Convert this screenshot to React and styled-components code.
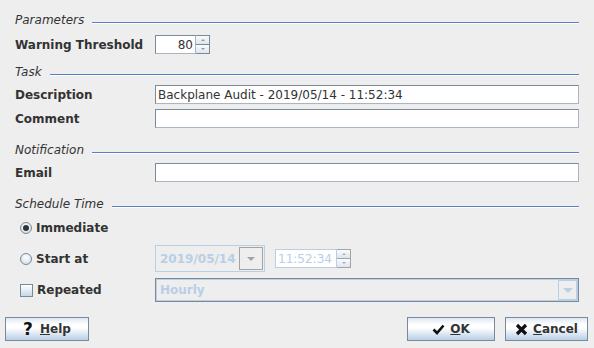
import React from "react";
import styled, { createGlobalStyle } from "styled-components";

const Global = createGlobalStyle`
  html, body {
    margin: 0;
    padding: 0;
    background: #eeeeee;
  }
  body {
    font-family: "DejaVu Sans", "Liberation Sans", sans-serif;
    font-size: 12px;
    color: #333333;
  }
`;

const Dialog = styled.div`
  width: 594px;
  height: 348px;
  display: flex;
  flex-direction: column;
  box-sizing: border-box;
  padding-top: 12px;
`;

const Form = styled.div`
  padding: 0 15px;
  display: flex;
  flex-direction: column;
`;

// section title with the etched rule after it
const Section = styled.div`
  display: flex;
  align-items: flex-start;
  height: 16px;
  margin-top: ${(p) => p.$top || 0}px;
  margin-bottom: ${(p) => p.$bottom || 0}px;
`;

const SectionTitle = styled.span`
  font-style: italic;
  font-size: 12px;
  line-height: 16px;
  color: #333;
  white-space: nowrap;
`;

const Rule = styled.div`
  flex: 1;
  margin-left: 8px;
  margin-top: 10px;
  height: 1px;
  background: #5b7fc4;
  box-shadow: 0 1px 0 #ffffff;
`;

const Row = styled.div`
  display: grid;
  grid-template-columns: 140px 1fr;
  align-items: center;
  height: ${(p) => p.$h || 19}px;
  margin-top: ${(p) => p.$top || 0}px;
`;

const Label = styled.label`
  font-weight: bold;
  font-size: 12px;
  color: #333;
  display: flex;
  align-items: center;
  gap: 4px;
`;

const TextField = styled.div`
  box-sizing: border-box;
  height: 19px;
  width: ${(p) => (p.$w ? `${p.$w}px` : "100%")};
  background: #fff;
  border: 1px solid #7a8a99;
  border-right-color: #a9b6c2;
  border-bottom-color: #a9b6c2;
  padding: 0 2px;
  display: flex;
  align-items: center;
  justify-content: ${(p) => (p.$right ? "flex-end" : "flex-start")};
  color: ${(p) => (p.$disabled ? "#b8cfe5" : "#333")};
  ${(p) => p.$disabled && "border-color: #b8cfe5;"}
  font-size: 12px;
  white-space: nowrap;
`;

const Spinner = styled.div`
  display: flex;
  align-items: stretch;
  height: 19px;
`;

const SpinButtons = styled.div`
  display: flex;
  flex-direction: column;
  width: 14px;
`;

const SpinButton = styled.div`
  flex: 1;
  box-sizing: border-box;
  border: 1px solid ${(p) => (p.$disabled ? "#a3a3a3" : "#7a8a99")};
  border-left: none;
  ${(p) => p.$down && "border-top: none;"}
  background: linear-gradient(#fafbfc, #dde5ee);
  display: flex;
  align-items: center;
  justify-content: center;
`;

const Arrow = styled.span`
  width: 0;
  height: 0;
  border-left: ${(p) => p.$size || 2}px solid transparent;
  border-right: ${(p) => p.$size || 2}px solid transparent;
  ${(p) =>
    p.$up
      ? `border-bottom: ${p.$size || 2}px solid ${p.$color || "#8d9aa8"};`
      : `border-top: ${p.$size || 2}px solid ${p.$color || "#8d9aa8"};`}
`;

const Radio = styled.span`
  box-sizing: border-box;
  width: 12px;
  height: 12px;
  border-radius: 50%;
  border: 1px solid #7a8a99;
  background: radial-gradient(circle at 50% 35%, #ffffff, #c8d8e8);
  margin-left: 5px;
  display: flex;
  align-items: center;
  justify-content: center;
  &::after {
    content: "";
    width: 6px;
    height: 6px;
    border-radius: 50%;
    background: #333;
    display: ${(p) => (p.$checked ? "block" : "none")};
  }
`;

const Check = styled.span`
  box-sizing: border-box;
  width: 13px;
  height: 13px;
  border: 1px solid #7a8a99;
  background: linear-gradient(#ffffff, #c8d8e8);
  margin-left: 5px;
`;

const Combo = styled.div`
  box-sizing: border-box;
  width: ${(p) => (p.$w ? `${p.$w}px` : "100%")};
  height: ${(p) => p.$h}px;
  border: 1px solid ${(p) => (p.$dark ? "#7a8a99" : "#b8cfe5")};
  ${(p) => p.$dark && "box-shadow: inset 0 0 0 1px #b8cfe5;"}
  background: #eeeeee;
  display: flex;
  align-items: center;
  padding: 1px;
`;

const ComboText = styled.span`
  flex: 1;
  font-weight: bold;
  font-size: 12px;
  color: #b8cfe5;
  padding-left: 3px;
`;

const ComboButton = styled.div`
  box-sizing: border-box;
  width: ${(p) => p.$w}px;
  height: 100%;
  border: 1px solid ${(p) => (p.$light ? "#b8cfe5" : "#a3a3a3")};
  display: flex;
  align-items: center;
  justify-content: center;
`;

const DateRow = styled.div`
  display: flex;
  align-items: center;
  gap: 10px;
`;

const ButtonBar = styled.div`
  display: flex;
  align-items: center;
  padding: 0 6px 0 5px;
  margin-top: 15px;
`;

const Spacer = styled.div`
  flex: 1;
`;

const Button = styled.button`
  box-sizing: border-box;
  width: ${(p) => p.$w}px;
  height: 24px;
  margin-left: ${(p) => p.$ml || 0}px;
  border: 1px solid #7a8a99;
  background: linear-gradient(#dde8f3 0%, #ffffff 30%, #ffffff 45%, #b8cfe5 100%);
  font-family: "DejaVu Sans", "Liberation Sans", sans-serif;
  font-weight: bold;
  font-size: 12px;
  color: #333;
  display: flex;
  align-items: center;
  justify-content: center;
  gap: ${(p) => p.$gap || 5}px;
  padding: 0;
`;

const Glyph = styled.span`
  font-size: ${(p) => p.$size || 13}px;
  color: #111;
  line-height: 1;
`;

const Mn = styled.span`
  text-decoration: underline;
`;

const CheckIcon = () => (
  <svg width="13" height="11" viewBox="0 0 13 11">
    <path d="M1.5 5.5 L5 9 L11.5 1.5" fill="none" stroke="#111" strokeWidth="2.6" />
  </svg>
);

const CrossIcon = () => (
  <svg width="13" height="13" viewBox="0 0 13 13">
    <path d="M2 2 L11 11 M11 2 L2 11" fill="none" stroke="#111" strokeWidth="3.2" />
  </svg>
);

export default function App() {
  return (
    <Dialog>
      <Global />
      <Form>
        <Section $bottom={7}>
          <SectionTitle>Parameters</SectionTitle>
          <Rule />
        </Section>
        <Row>
          <Label>Warning Threshold</Label>
          <Spinner>
            <TextField $w={41} $right>
              80
            </TextField>
            <SpinButtons>
              <SpinButton>
                <Arrow $up />
              </SpinButton>
              <SpinButton $down>
                <Arrow />
              </SpinButton>
            </SpinButtons>
          </Spinner>
        </Row>

        <Section $top={10} $bottom={5}>
          <SectionTitle>Task</SectionTitle>
          <Rule />
        </Section>
        <Row>
          <Label>Description</Label>
          <TextField>Backplane Audit - 2019/05/14 - 11:52:34</TextField>
        </Row>
        <Row $top={5}>
          <Label>Comment</Label>
          <TextField />
        </Row>

        <Section $top={14} $bottom={5}>
          <SectionTitle>Notification</SectionTitle>
          <Rule />
        </Section>
        <Row>
          <Label>Email</Label>
          <TextField />
        </Row>

        <Section $top={14}>
          <SectionTitle>Schedule Time</SectionTitle>
          <Rule />
        </Section>
        <Row $h={16} $top={8}>
          <Label>
            <Radio $checked />
            Immediate
          </Label>
        </Row>
        <Row $h={27} $top={9}>
          <Label>
            <Radio />
            Start at
          </Label>
          <DateRow>
            <Combo $w={110} $h={27}>
              <ComboText>2019/05/14</ComboText>
              <ComboButton $w={24}>
                <Arrow $size={4} $color="#a3a3a3" />
              </ComboButton>
            </Combo>
            <Spinner>
              <TextField $w={62} $disabled>
                11:52:34
              </TextField>
              <SpinButtons>
                <SpinButton $disabled>
                  <Arrow $up $color="#b0b0b0" />
                </SpinButton>
                <SpinButton $disabled $down>
                  <Arrow $color="#b0b0b0" />
                </SpinButton>
              </SpinButtons>
            </Spinner>
          </DateRow>
        </Row>
        <Row $h={24} $top={6}>
          <Label>
            <Check />
            Repeated
          </Label>
          <Combo $h={24} $dark>
            <ComboText>Hourly</ComboText>
            <ComboButton $w={19} $light>
              <Arrow $size={5} $color="#b8cfe5" />
            </ComboButton>
          </Combo>
        </Row>
      </Form>

      <ButtonBar>
        <Button $w={84} $gap={7}>
          <Glyph $size={17}>?</Glyph>
          <span>
            <Mn>H</Mn>elp
          </span>
        </Button>
        <Spacer />
        <Button $w={88}>
          <CheckIcon />
          <span>
            <Mn>O</Mn>K
          </span>
        </Button>
        <Button $w={83} $ml={10}>
          <CrossIcon />
          <span>
            <Mn>C</Mn>ancel
          </span>
        </Button>
      </ButtonBar>
    </Dialog>
  );
}
